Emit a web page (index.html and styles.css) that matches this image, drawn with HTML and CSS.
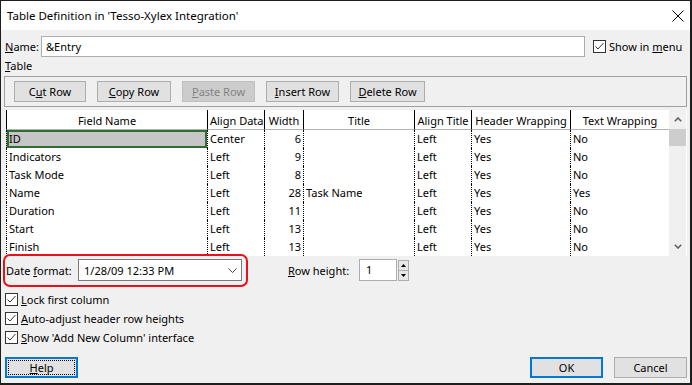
FILE: index.html
```html
<!DOCTYPE html>
<html>
  <head>
    <link rel="stylesheet" href="styles.css">
  </head>
  <body>
    <div class="dialog">
      <div class="titlebar">
        <span>Table Definition in 'Tesso-Xylex Integration'</span>
        <svg class="close" width="12" height="12" viewBox="0 0 12 12">
          <path d="M0.5 0.5L11.5 11.5M11.5 0.5L0.5 11.5" stroke="#000" stroke-width="1" fill="none"/>
        </svg>
      </div>
      <div class="content">
        <div class="name-row">
          <label class="name-label"><u>N</u>ame:</label>
          <div class="textbox name-box">&amp;Entry</div>
          <label class="check menu-check">
            <span class="box"><svg width="11" height="11" viewBox="0 0 11 11"><path d="M1.5 5.5L4 8L9.5 2" stroke="#333" stroke-width="1" fill="none"/></svg></span>
            Show in&nbsp;<u>m</u>enu
          </label>
        </div>
        <div class="caption"><u>T</u>able</div>
        <div class="toolbar">
          <div class="btn w72">C<u>u</u>t Row</div>
          <div class="btn w74"><u>C</u>opy Row</div>
          <div class="btn w73 off"><u>P</u>aste Row</div>
          <div class="btn w73"><u>I</u>nsert Row</div>
          <div class="btn w75"><u>D</u>elete Row</div>
        </div>
        <div class="grid">
          <div class="cells">
            <div class="head">Field Name</div>
            <div class="head">Align Data</div>
            <div class="head">Width</div>
            <div class="head">Title</div>
            <div class="head">Align Title</div>
            <div class="head">Header Wrapping</div>
            <div class="head">Text Wrapping</div>

            <div class="sel">ID</div><div>Center</div><div class="num">6</div><div></div><div>Left</div><div>Yes</div><div>No</div>
            <div>Indicators</div><div>Left</div><div class="num">9</div><div></div><div>Left</div><div>Yes</div><div>No</div>
            <div>Task Mode</div><div>Left</div><div class="num">8</div><div></div><div>Left</div><div>Yes</div><div>No</div>
            <div>Name</div><div>Left</div><div class="num">28</div><div>Task Name</div><div>Left</div><div>Yes</div><div>Yes</div>
            <div>Duration</div><div>Left</div><div class="num">11</div><div></div><div>Left</div><div>Yes</div><div>No</div>
            <div>Start</div><div>Left</div><div class="num">13</div><div></div><div>Left</div><div>Yes</div><div>No</div>
            <div>Finish</div><div>Left</div><div class="num">13</div><div></div><div>Left</div><div>Yes</div><div>No</div>
          </div>
          <div class="scrollbar">
            <div class="arrow"><svg width="8" height="5" viewBox="0 0 8 5"><path d="M0.8 4.2L4 1L7.2 4.2" stroke="#606060" stroke-width="1.6" fill="none"/></svg></div>
            <div class="thumb"></div>
            <div class="track"></div>
            <div class="arrow"><svg width="8" height="5" viewBox="0 0 8 5"><path d="M0.8 0.8L4 4L7.2 0.8" stroke="#606060" stroke-width="1.6" fill="none"/></svg></div>
          </div>
        </div>
        <div class="options">
          <div class="date-format">
            <label class="date-label">Date <u>f</u>ormat:</label>
            <div class="combo">
              <span>1/28/09 12:33 PM</span>
              <svg width="9" height="5" viewBox="0 0 9 5"><path d="M0.5 0.5L4.5 4.5L8.5 0.5" stroke="#444" stroke-width="1" fill="none"/></svg>
            </div>
          </div>
          <label class="row-label"><u>R</u>ow height:</label>
          <div class="textbox row-box">1</div>
          <div class="spinner">
            <div class="spin"><svg width="5" height="3" viewBox="0 0 5 3"><path d="M0 3L2.5 0L5 3Z" fill="#000"/></svg></div>
            <div class="spin"><svg width="5" height="3" viewBox="0 0 5 3"><path d="M0 0L2.5 3L5 0Z" fill="#000"/></svg></div>
          </div>
        </div>
        <div class="checks">
          <label class="check">
            <span class="box"><svg width="11" height="11" viewBox="0 0 11 11"><path d="M1.5 5.5L4 8L9.5 2" stroke="#333" stroke-width="1" fill="none"/></svg></span>
            <span><u>L</u>ock first column</span>
          </label>
          <label class="check">
            <span class="box"><svg width="11" height="11" viewBox="0 0 11 11"><path d="M1.5 5.5L4 8L9.5 2" stroke="#333" stroke-width="1" fill="none"/></svg></span>
            <span><u>A</u>uto-adjust header row heights</span>
          </label>
          <label class="check">
            <span class="box"><svg width="11" height="11" viewBox="0 0 11 11"><path d="M1.5 5.5L4 8L9.5 2" stroke="#333" stroke-width="1" fill="none"/></svg></span>
            <span><u>S</u>how 'Add New Column' interface</span>
          </label>
        </div>
        <div class="footer">
          <div class="btn default help"><u>H</u>elp</div>
          <div class="btn default ok">OK</div>
          <div class="btn cancel">Cancel</div>
        </div>
      </div>
    </div>
  </body>
</html>
```

FILE: styles.css
```css
* {
  box-sizing: border-box;
  margin: 0;
  padding: 0;
}

body {
  font-family: "Noto Sans", sans-serif;
  font-size: 11px;
  color: #000;
  background: #fff;
}

.dialog {
  width: 692px;
  height: 385px;
  display: flex;
  flex-direction: column;
  background: #f0f0f0;
  border: 1px solid #1e1e1e;
  border-right-width: 2px;
  border-bottom-width: 2px;
}

.titlebar {
  height: 29px;
  background: #fff;
  display: flex;
  align-items: center;
  justify-content: space-between;
  padding: 0 6px 0 6px;
  font-size: 11.5px;
}

.content {
  flex: 1;
  padding: 6px 3px 0 3px;
}

u {
  text-decoration: underline;
}

/* name row */
.name-row {
  display: flex;
  align-items: center;
  height: 21px;
}

.name-label {
  flex: none;
  margin: 0 2px 0 1px;
  white-space: nowrap;
}

.textbox {
  height: 21px;
  line-height: 19px;
  padding-left: 5px;
  background: #fff;
  border: 1px solid #abadb3;
}

.name-box {
  flex: 1;
  padding-left: 4px;
}

.check {
  display: flex;
  align-items: center;
  white-space: nowrap;
}

.menu-check {
  flex: none;
  width: 94px;
  margin-left: 8px;
}

.box {
  flex: none;
  width: 13px;
  height: 13px;
  margin-right: 3px;
  display: flex;
  align-items: center;
  justify-content: center;
  background: #fff;
  border: 1px solid #333;
}

.caption {
  margin: 1px 0 0 1px;
  line-height: 16px;
}

/* buttons */
.toolbar {
  margin-top: 2px;
  display: flex;
  gap: 11px;
  padding: 4px 9px;
  border: 1px solid #a0a0a0;
}

.btn {
  height: 21px;
  display: flex;
  align-items: center;
  justify-content: center;
  background: #e1e1e1;
  border: 1px solid #adadad;
}

.btn.off {
  background: #cccccc;
  border-color: #bfbfbf;
  color: #838383;
}

.w72 { width: 72px; }
.w73 { width: 73px; }
.w74 { width: 74px; }
.w75 { width: 75px; }

/* field grid */
.grid {
  margin: 3px 0 0 2px;
  height: 146px;
  display: flex;
  background: #fff;
  border-right: 1px solid #fff;
}

.cells {
  display: grid;
  grid-template-columns: 201px 57px 39px 111px 57px 99px 99px;
  grid-template-rows: 20px;
  grid-auto-rows: 18px;
  align-content: start;
}

.cells > div {
  padding: 0 2px;
  line-height: 18px;
  white-space: nowrap;
  overflow: hidden;
  border-left: 1px dotted #000;
}

.cells > .head {
  padding-top: 2px;
  text-align: center;
  line-height: 17px;
  border-left-style: solid;
  border-bottom: 1px solid #b4b4b4;
}

.cells > .num {
  text-align: right;
}

.cells > .sel {
  background: #c6c6c6;
  box-shadow: inset 0 0 0 2px #2f6e32;
}

.scrollbar {
  width: 17px;
  display: flex;
  flex-direction: column;
  background: #f0f0f0;
}

.arrow {
  height: 19px;
  display: flex;
  align-items: center;
  justify-content: center;
}

.thumb {
  height: 17px;
  background: #cdcdcd;
}

.track {
  flex: 1;
}

/* date format / row height */
.options {
  margin-top: 3px;
  height: 22px;
  display: flex;
  align-items: center;
}

.date-format {
  position: relative;
  display: flex;
  align-items: center;
}

.date-format::after {
  content: "";
  position: absolute;
  left: -1px;
  top: -5px;
  right: -6px;
  bottom: -6px;
  border: 2px solid #e8101a;
  border-radius: 7px;
}

.date-label {
  width: 72px;
  margin-left: 2px;
}

.combo {
  width: 164px;
  height: 22px;
  display: flex;
  align-items: center;
  justify-content: space-between;
  padding: 0 4px 0 5px;
  background: #fff;
  border: 1px solid #7a7a7a;
}

.row-label {
  width: 71px;
  margin-left: 46px;
}

.row-box {
  width: 38px;
  height: 22px;
  line-height: 20px;
  padding-left: 6px;
}

.spinner {
  width: 11px;
  height: 21px;
  margin-left: 1px;
  display: flex;
  flex-direction: column;
  border: 1px solid #adadad;
  background: #e8e8e8;
}

.spin {
  flex: 1;
  display: flex;
  align-items: center;
  justify-content: center;
}

.spin + .spin {
  border-top: 1px solid #adadad;
}

/* check options */
.checks {
  margin: 9px 0 0 1px;
}

.checks .check {
  height: 19px;
}

/* footer */
.footer {
  margin-top: 10px;
  display: flex;
}

.footer .btn {
  width: 73px;
}

.btn.default {
  border: 2px solid #0078d7;
}

.help {
  margin-left: 1px;
  outline: 1px dotted #000;
  outline-offset: -4px;
}

.ok {
  margin-left: auto;
  margin-right: 11px;
}
```
